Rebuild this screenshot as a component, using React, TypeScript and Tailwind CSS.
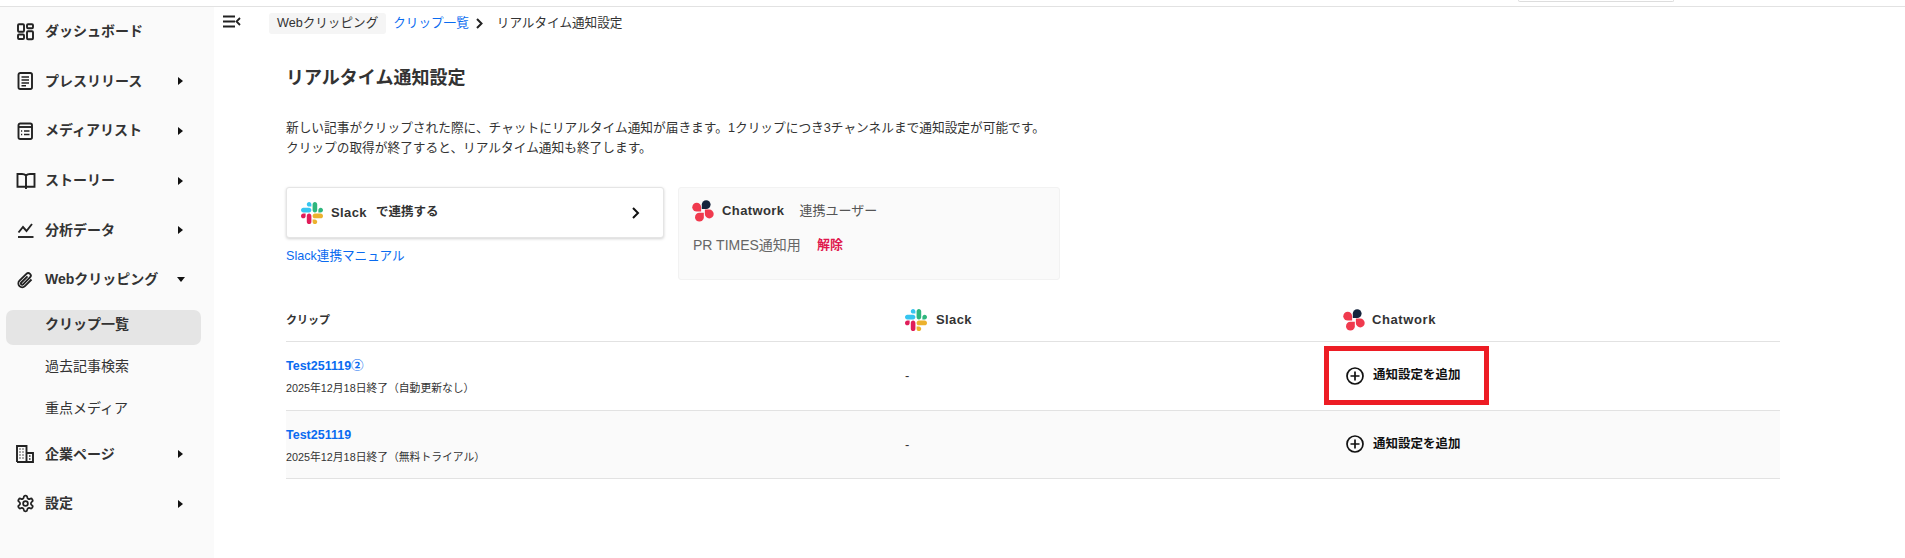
import React from "react";

const font = { fontFamily: '"Liberation Sans", "Noto Sans CJK JP", sans-serif' };

function SlackLogo({ size = 22 }: { size?: number }) {
  return (
    <svg width={size} height={size} viewBox="0 0 122.8 122.8" className="shrink-0">
      <path fill="#E01E5A" d="M25.8 77.6c0 7.1-5.8 12.9-12.9 12.9S0 84.7 0 77.6s5.8-12.9 12.9-12.9h12.9v12.9zM32.3 77.6c0-7.1 5.8-12.9 12.9-12.9s12.9 5.8 12.9 12.9v32.3c0 7.1-5.8 12.9-12.9 12.9s-12.9-5.8-12.9-12.9V77.6z" />
      <path fill="#36C5F0" d="M45.2 25.8c-7.1 0-12.9-5.8-12.9-12.9S38.1 0 45.2 0s12.9 5.8 12.9 12.9v12.9H45.2zM45.2 32.3c7.1 0 12.9 5.8 12.9 12.9s-5.8 12.9-12.9 12.9H12.9C5.8 58.1 0 52.3 0 45.2s5.8-12.9 12.9-12.9h32.3z" />
      <path fill="#2EB67D" d="M97 45.2c0-7.1 5.8-12.9 12.9-12.9s12.9 5.8 12.9 12.9-5.8 12.9-12.9 12.9H97V45.2zM90.5 45.2c0 7.1-5.8 12.9-12.9 12.9s-12.9-5.8-12.9-12.9V12.9C64.7 5.8 70.5 0 77.6 0s12.9 5.8 12.9 12.9v32.3z" />
      <path fill="#ECB22E" d="M77.6 97c7.1 0 12.9 5.8 12.9 12.9s-5.8 12.9-12.9 12.9-12.9-5.8-12.9-12.9V97h12.9zM77.6 90.5c-7.1 0-12.9-5.8-12.9-12.9s5.8-12.9 12.9-12.9h32.3c7.1 0 12.9 5.8 12.9 12.9s-5.8 12.9-12.9 12.9H77.6z" />
    </svg>
  );
}

const petal = "M-4.4 -4.4H0A4.4 4.4 0 1 1 -4.4 0Z";

function ChatworkLogo({ size = 22 }: { size?: number }) {
  return (
    <svg width={size} height={size} viewBox="0 0 22 22" className="shrink-0">
      <path fill="#F03A4E" transform="translate(4.7 7.2) rotate(180)" d={petal} />
      <path fill="#14233C" transform="translate(14.2 4.6) rotate(-90)" d={petal} />
      <path fill="#F03A4E" transform="translate(7.4 17.2) rotate(90)" d={petal} />
      <path fill="#F03A4E" transform="translate(17.3 14) rotate(0)" d={petal} />
    </svg>
  );
}

const ic = { fill: "none", stroke: "#222", strokeWidth: 1.9 };

const icons: Record<string, React.ReactNode> = {
  dash: (
    <svg width="18" height="18" viewBox="0 0 18 18" {...ic}>
      <rect x="2" y="1.300" width="6" height="7.500" rx="1" />
      <rect x="11" y="1.300" width="6" height="4" rx="1" />
      <rect x="2" y="11.500" width="6" height="4.500" rx="1" />
      <rect x="11" y="8.200" width="6" height="8" rx="1" />
    </svg>
  ),
  press: (
    <svg width="18" height="18" viewBox="0 0 18 18" {...ic}>
      <rect x="2.500" y="1" width="13.500" height="16" rx="1.800" />
      <path d="M5.500 5h7.500M5.500 8h7.500M5.500 11h7.500M5.500 13.800h4.500" strokeWidth="1.500" />
    </svg>
  ),
  media: (
    <svg width="18" height="18" viewBox="0 0 18 18" {...ic}>
      <rect x="2.500" y="1.500" width="13.500" height="15.500" rx="1.800" />
      <path d="M2.500 5h13.500" />
      <path d="M5 9h1.200M8 9h5.500M5 12.500h1.200M8 12.500h5.500" strokeWidth="1.400" />
    </svg>
  ),
  story: (
    <svg width="20" height="18" viewBox="0 0 20 18" {...ic}>
      <path d="M10 3.500C9 2.500 7.500 2 6 2H1.500v12.800H9c.6 0 1 .3 1 .8 0-.5.4-.8 1-.8h7.500V2H14c-1.500 0-3 .5-4 1.500zM10 3.500v13.500" />
    </svg>
  ),
  chart: (
    <svg width="18" height="18" viewBox="0 0 18 18" {...ic}>
      <path d="M2.500 11.500L7 6l3.500 4L16 3" />
      <path d="M2 16h15.500" />
    </svg>
  ),
  clip: (
    <svg width="18" height="18" viewBox="0 0 18 18" {...ic}>
      <path d="M15.500 8.500l-6.600 6.600a3.800 3.800 0 0 1-5.400-5.400l6.900-6.900a2.500 2.500 0 0 1 3.600 3.600l-6.900 6.900a1.200 1.200 0 0 1-1.800-1.800l6.200-6.200" />
    </svg>
  ),
  building: (
    <svg width="18" height="18" viewBox="0 0 18 18" {...ic}>
      <path d="M1 17V1h9.500V17M10.500 8h6.500V17H1" />
      <path d="M3.500 4h1M6.500 4h1M3.500 7h1M6.500 7h1M3.500 10h1M6.500 10h1M3.500 13h1M6.500 13h1M13 11h1.500M13 14h1.500" strokeWidth="1.400" />
    </svg>
  ),
  gear: (
    <svg width="19" height="19" viewBox="0 0 24 24" fill="none" stroke="#222" strokeWidth="2.200" strokeLinecap="round" strokeLinejoin="round">
      <path d="M12.220 2h-.440a2 2 0 0 0-2 2v.180a2 2 0 0 1-1 1.730l-.430.250a2 2 0 0 1-2 0l-.150-.080a2 2 0 0 0-2.730.730l-.220.380a2 2 0 0 0 .730 2.730l.150.100a2 2 0 0 1 1 1.720v.510a2 2 0 0 1-1 1.740l-.150.090a2 2 0 0 0-.730 2.730l.220.380a2 2 0 0 0 2.730.730l.150-.080a2 2 0 0 1 2 0l.430.250a2 2 0 0 1 1 1.730V20a2 2 0 0 0 2 2h.440a2 2 0 0 0 2-2v-.180a2 2 0 0 1 1-1.730l.430-.250a2 2 0 0 1 2 0l.150.080a2 2 0 0 0 2.730-.730l.220-.390a2 2 0 0 0-.730-2.730l-.150-.080a2 2 0 0 1-1-1.740v-.500a2 2 0 0 1 1-1.740l.150-.090a2 2 0 0 0 .730-2.730l-.220-.380a2 2 0 0 0-2.730-.730l-.150.080a2 2 0 0 1-2 0l-.430-.250a2 2 0 0 1-1-1.730V4a2 2 0 0 0-2-2z" />
      <circle cx="12" cy="12" r="3" />
    </svg>
  ),
};

function NavItem({ icon, label, arrow }: { icon: string; label: string; arrow?: "right" | "down" }) {
  return (
    <div className="flex items-center h-[49.600px] text-[14px] font-bold text-[#333]">
      <div className="w-[45px] pl-[15.500px] flex items-center justify-start">{icons[icon]}</div>
      <span className="w-[133px] whitespace-nowrap">{label}</span>
      {arrow === "right" && <span className="border-y-[4.500px] border-y-transparent border-l-[5px] border-l-[#111]" />}
      {arrow === "down" && <span className="-ml-[1px] border-x-[4.500px] border-x-transparent border-t-[5px] border-t-[#111]" />}
    </div>
  );
}

function SubItem({ label, active }: { label: string; active?: boolean }) {
  return (
    <div
      className={
        "h-[35px] ml-[6px] w-[195px] rounded-[7px] pl-[39px] pb-[5px] flex items-center text-[14px] text-[#333] " +
        (active ? "bg-[#e5e5e5] font-bold" : "")
      }
    >
      {label}
    </div>
  );
}

function AddButton() {
  return (
    <div className="flex items-center gap-[9px] pl-[3px] text-[12.500px] font-bold text-[#111]">
      <svg width="18" height="18" viewBox="0 0 18 18" fill="none" stroke="#111" strokeWidth="1.700">
        <circle cx="9" cy="9" r="8" />
        <path d="M9 4.500v9M4.500 9h9" />
      </svg>
      <span>通知設定を追加</span>
    </div>
  );
}

function Row({ title, sub, shaded }: { title: string; sub: string; shaded?: boolean }) {
  return (
    <div className={"grid grid-cols-[619px_438px_1fr] items-center h-[68.500px] border-b border-[#e2e2e2] " + (shaded ? "bg-[#fafafa]" : "")}>
      <div className="flex flex-col gap-[5px] pt-[2px]">
        <span className="text-[12.500px] font-bold leading-[18px] text-[#0a6bf0]">{title}</span>
        <span className="text-[10.800px] leading-[16px] text-[#333]">{sub}</span>
      </div>
      <div className="text-[13px] text-[#333]">-</div>
      <AddButton />
    </div>
  );
}

export default function App() {
  return (
    <div style={font} className="relative w-[1905px] h-[558px] overflow-hidden bg-white flex flex-col">
      <header className="h-[7px] shrink-0 border-b border-[#e2e2e2] flex justify-start">
        <div className="ml-[1518px] w-[156px] h-[2px] rounded-b-[4px] border border-t-0 border-[#ddd]" />
      </header>
      <div className="flex flex-1 min-h-0">
        <aside className="w-[214px] shrink-0 bg-[#fafafa]">
          <NavItem icon="dash" label="ダッシュボード" />
          <NavItem icon="press" label="プレスリリース" arrow="right" />
          <NavItem icon="media" label="メディアリスト" arrow="right" />
          <NavItem icon="story" label="ストーリー" arrow="right" />
          <NavItem icon="chart" label="分析データ" arrow="right" />
          <NavItem icon="clip" label="Webクリッピング" arrow="down" />
          <div className="flex flex-col gap-[7px] pt-[5px]">
            <SubItem label="クリップ一覧" active />
            <SubItem label="過去記事検索" />
            <SubItem label="重点メディア" />
          </div>
          <div className="pt-[1px]">
            <NavItem icon="building" label="企業ページ" arrow="right" />
            <NavItem icon="gear" label="設定" arrow="right" />
          </div>
        </aside>
        <main className="flex-1 min-w-0 text-[#333]">
          <div className="flex items-center h-[32px] pl-[9px] text-[12.600px]">
            <svg width="18" height="13" viewBox="0 0 18 13" fill="none" stroke="#222" strokeWidth="1.800" className="-mt-[3px]">
              <path d="M0 1.500h12M0 6.500h12M0 11.500h12" />
              <path d="M17 3L13.500 6.500 17 10" />
            </svg>
            <span className="ml-[28px] h-[21px] px-[8px] rounded-[3px] bg-[#f5f5f5] flex items-center">Webクリッピング</span>
            <a className="ml-[7px] text-[#0a6bf0]">クリップ一覧</a>
            <svg width="9" height="11" viewBox="0 0 9 11" fill="none" stroke="#222" strokeWidth="2" className="ml-[6px]">
              <path d="M2 1l4.500 4.500L2 10" />
            </svg>
            <span className="ml-[13px]">リアルタイム通知設定</span>
          </div>
          <div className="pl-[72px] pr-[125px]">
            <h1 className="mt-[25px] text-[18px] leading-[28px] font-bold text-[#333]">リアルタイム通知設定</h1>
            <p className="mt-[26px] text-[12.700px] leading-[20px] text-[#333]">
              新しい記事がクリップされた際に、チャットにリアルタイム通知が届きます。1クリップにつき3チャンネルまで通知設定が可能です。
              <br />
              クリップの取得が終了すると、リアルタイム通知も終了します。
            </p>
            <div className="flex gap-[14px] mt-[29px]">
              <div className="w-[378px]">
                <div className="flex items-center h-[51px] rounded-[3px] border border-[#e5e5e5] shadow-[0_1px_3px_rgba(0,0,0,0.18)] bg-white pl-[14px] pr-[22px]">
                  <SlackLogo />
                  <span className="ml-[8px] text-[13px] font-bold tracking-[0.4px] text-[#333]">Slack</span>
                  <span className="ml-[9px] text-[12.500px] font-bold text-[#333]">で連携する</span>
                  <svg width="10" height="12" viewBox="0 0 10 12" fill="none" stroke="#111" strokeWidth="2" className="ml-auto">
                    <path d="M2 1l5 5-5 5" />
                  </svg>
                </div>
                <a className="block mt-[9px] text-[12.600px] leading-[18px] text-[#0a6bf0]">Slack連携マニュアル</a>
              </div>
              <div className="w-[382px] h-[93px] rounded-[3px] bg-[#fafafa] border border-[#f2f2f2] pl-[13px] pt-[12px]">
                <div className="flex items-center">
                  <ChatworkLogo />
                  <span className="ml-[8px] text-[13px] font-bold tracking-[0.4px] text-[#333]">Chatwork</span>
                  <span className="ml-[15px] text-[13px] text-[#555]">連携ユーザー</span>
                </div>
                <div className="flex items-center mt-[14px] text-[14px] leading-[18px] pl-[1px]">
                  <span className="text-[#666]">PR TIMES通知用</span>
                  <span className="ml-[16px] text-[13px] font-bold text-[#e0184d]">解除</span>
                </div>
              </div>
            </div>
            <div className="mt-[8px]">
              <div className="grid grid-cols-[619px_438px_1fr] items-center h-[54px] pt-[11px] border-b border-[#e2e2e2] text-[#333]">
                <span className="text-[11px] font-bold">クリップ</span>
                <div className="flex items-center gap-[9px]">
                  <SlackLogo />
                  <span className="text-[13px] font-bold tracking-[0.4px]">Slack</span>
                </div>
                <div className="flex items-center gap-[7px]">
                  <ChatworkLogo />
                  <span className="text-[13px] font-bold tracking-[0.6px]">Chatwork</span>
                </div>
              </div>
              <Row title="Test251119②" sub="2025年12月18日終了（自動更新なし）" />
              <Row title="Test251119" sub="2025年12月18日終了（無料トライアル）" shaded />
            </div>
          </div>
        </main>
      </div>
      <div className="absolute left-[1324px] top-[346px] w-[165px] h-[59px] border-[5px] border-[#ed1c24]" />
    </div>
  );
}
